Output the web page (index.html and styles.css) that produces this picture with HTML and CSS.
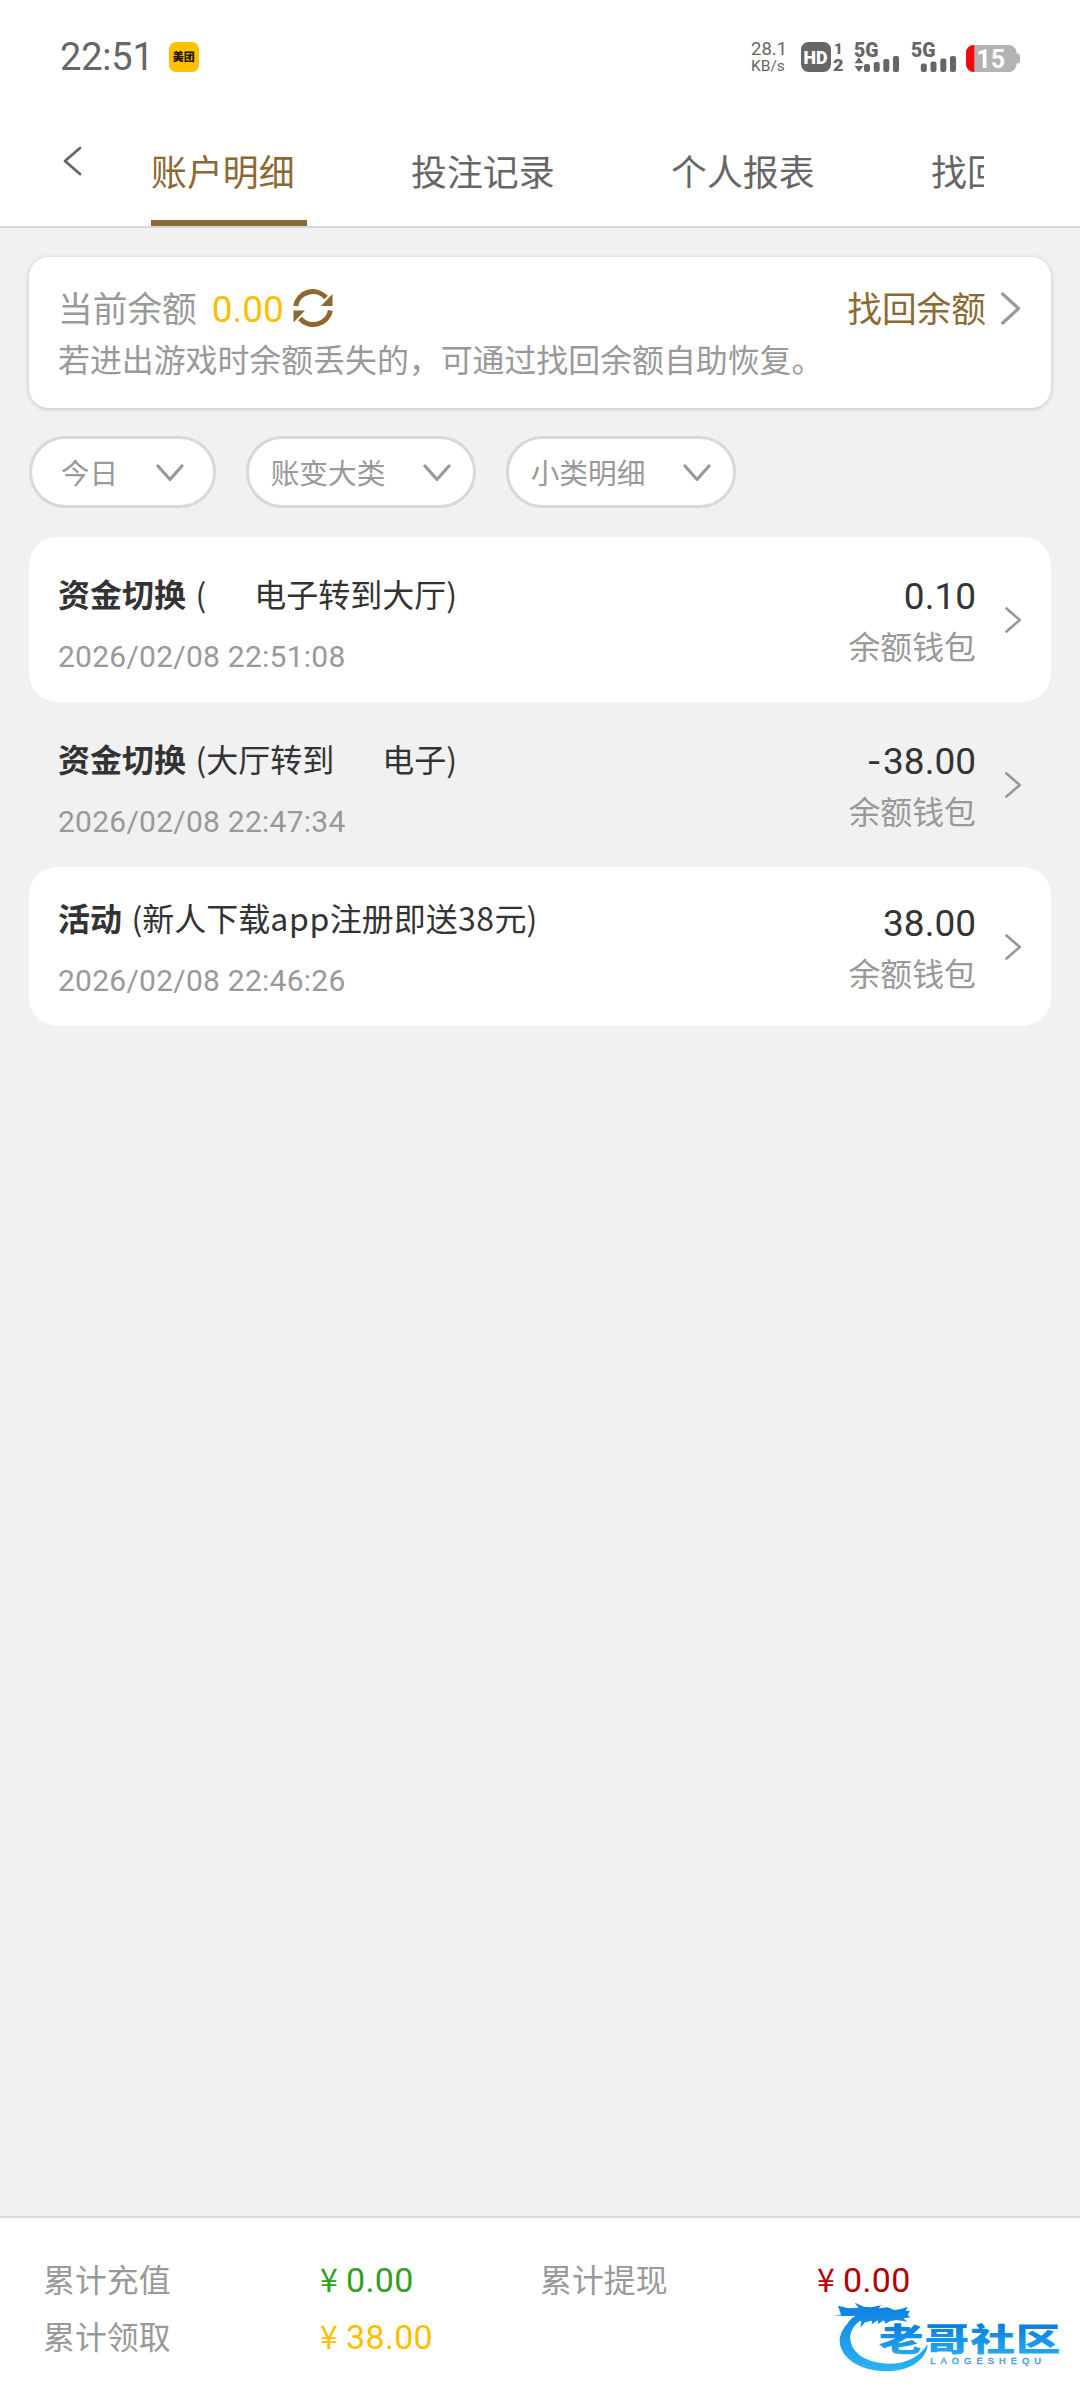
FILE: index.html
```html
<!DOCTYPE html>
<html lang="zh-CN">
<head>
<meta charset="utf-8">
<title>账户明细</title>
<link rel="stylesheet" href="styles.css">
</head>
<body>
<div class="page">
  <header class="header">
    <div class="status">
      <span class="time">22:51</span>
      <span class="app-badge">美团</span>
      <div class="status-right">
        <div class="net"><span class="net-value">28.1</span><span class="net-unit">KB/s</span></div>
        <svg class="status-icons" width="220" height="52" viewBox="0 -10 220 52">
          <g fill="#666" font-family="Roboto, sans-serif" font-weight="900">
            <rect x="1" y="1" width="30" height="30" rx="7.5"/>
            <text x="3.4" y="22.5" font-size="19" fill="#fff" textLength="24" lengthAdjust="spacingAndGlyphs">HD</text>
            <text x="34" y="12.5" font-size="15">1</text>
            <text x="33" y="30" font-size="16" textLength="10.5" lengthAdjust="spacingAndGlyphs">2</text>
            <text x="54" y="15.8" font-size="20" textLength="24.5" lengthAdjust="spacingAndGlyphs">5G</text>
            <path d="M59 16.3l4.400 6h-8.800zM59 31l4.400-6h-8.800z"/>
            <rect x="64" y="23" width="6" height="8" rx="2"/>
            <rect x="73.7" y="21" width="6" height="10" rx="2"/>
            <rect x="83.3" y="18" width="6" height="13" rx="2"/>
            <rect x="93" y="15" width="6" height="16" rx="2"/>
            <text x="111" y="15.8" font-size="20" textLength="24.5" lengthAdjust="spacingAndGlyphs">5G</text>
            <rect x="120.8" y="22.5" width="6" height="8.5" rx="2"/>
            <rect x="130.5" y="20.5" width="6" height="10.5" rx="2"/>
            <rect x="140.3" y="17.5" width="6" height="13.5" rx="2"/>
            <rect x="150" y="15" width="6" height="16" rx="2"/>
          </g>
          <path d="M174 4h35a7.500 7.500 0 0 1 7.500 7.500v1h1.500q2 0 2 3v4q0 3-2 3h-1.500v1a7.500 7.500 0 0 1-7.500 7.500h-35z" fill="#b3b3b3"/>
          <path d="M174.300 4v27h-.8a7.500 7.500 0 0 1-7.500-7.500v-12a7.500 7.500 0 0 1 7.500-7.500z" fill="#f00a0a"/>
          <text x="176.500" y="27" font-family="Roboto, sans-serif" font-weight="700" font-size="25" fill="#fff">15</text>
        </svg>
      </div>
    </div>
    <nav class="nav">
      <svg class="back" width="24" height="32" viewBox="0 0 24 32"><path d="M18 3L3 16l15 13" fill="none" stroke="#666" stroke-width="2.800" stroke-linecap="round" stroke-linejoin="round"/></svg>
      <div class="tabs">
        <a class="tab active">账户明细</a>
        <a class="tab">投注记录</a>
        <a class="tab">个人报表</a>
        <a class="tab">找回余额</a>
      </div>
    </nav>
  </header>

  <main class="main">
    <section class="balance">
      <div class="balance-line">
        <span>当前余额</span>
        <span class="balance-value">0.00</span>
        <svg class="refresh" width="40" height="40" viewBox="0 0 40 40"><g fill="none" stroke="#8c6932" stroke-width="5"><path d="M2.600 18A17.400 17 0 0 1 33 9.500"/><path d="M37.400 22.500A17.400 17 0 0 1 7 30.500"/></g><path d="M39.500 6v12H28zM.5 34.500V22.500H12z" fill="#8c6932"/></svg>
        <a class="recover">找回余额</a>
        <svg class="recover-arrow" width="20" height="33" viewBox="0 0 20 33"><path d="M1.700 2l15.800 14.500L1.700 31" fill="none" stroke="#999" stroke-width="3.200" stroke-linecap="round" stroke-linejoin="round"/></svg>
      </div>
      <p class="hint">若进出游戏时余额丢失的，可通过找回余额自助恢复。</p>
    </section>

    <section class="filters">
      <button class="pill pill-short">今日<svg class="down" width="28" height="18" viewBox="0 0 28 18"><path d="M2 2l12 13.500L26 2" fill="none" stroke="#999" stroke-width="3.200" stroke-linecap="round" stroke-linejoin="round"/></svg></button>
      <button class="pill">账变大类<svg class="down" width="28" height="18" viewBox="0 0 28 18"><path d="M2 2l12 13.500L26 2" fill="none" stroke="#999" stroke-width="3.200" stroke-linecap="round" stroke-linejoin="round"/></svg></button>
      <button class="pill">小类明细<svg class="down" width="28" height="18" viewBox="0 0 28 18"><path d="M2 2l12 13.500L26 2" fill="none" stroke="#999" stroke-width="3.200" stroke-linecap="round" stroke-linejoin="round"/></svg></button>
    </section>

    <section class="list">
      <article class="row">
        <div class="info">
          <div class="title tall"><b>资金切换</b><span class="open">(</span><span class="blank"></span><span>电子转到大厅)</span></div>
          <div class="date">2026/02/08 22:51:08</div>
        </div>
        <div class="sum"><span class="amount">0.10</span><span class="wallet">余额钱包</span></div>
        <svg class="go" width="18" height="28" viewBox="0 0 18 28"><path d="M2.500 2.500L15.800 14 2.500 25.500" fill="none" stroke="#999" stroke-width="2.700" stroke-linecap="round" stroke-linejoin="round"/></svg>
      </article>
      <article class="row plain">
        <div class="info">
          <div class="title tall"><b>资金切换</b><span class="open">(</span><span>大厅转到</span><span class="blank"></span><span>电子)</span></div>
          <div class="date">2026/02/08 22:47:34</div>
        </div>
        <div class="sum"><span class="amount"><span class="minus">-</span>38.00</span><span class="wallet">余额钱包</span></div>
        <svg class="go" width="18" height="28" viewBox="0 0 18 28"><path d="M2.500 2.500L15.800 14 2.500 25.500" fill="none" stroke="#999" stroke-width="2.700" stroke-linecap="round" stroke-linejoin="round"/></svg>
      </article>
      <article class="row">
        <div class="info">
          <div class="title"><b>活动</b><span class="open">(</span><span>新人下载<span class="latin">app</span>注册即送<span class="latin">38</span>元)</span></div>
          <div class="date">2026/02/08 22:46:26</div>
        </div>
        <div class="sum"><span class="amount">38.00</span><span class="wallet">余额钱包</span></div>
        <svg class="go" width="18" height="28" viewBox="0 0 18 28"><path d="M2.500 2.500L15.800 14 2.500 25.500" fill="none" stroke="#999" stroke-width="2.700" stroke-linecap="round" stroke-linejoin="round"/></svg>
      </article>
    </section>
  </main>

  <footer class="totals">
    <span>累计充值</span><span class="money green"><i>¥</i>0.00</span>
    <span>累计提现</span><span class="money red"><i>¥</i>0.00</span>
    <span>累计领取</span><span class="money yellow"><i>¥</i>38.00</span>
  </footer>

  <svg class="watermark" width="260" height="110" viewBox="0 0 780 330">
    <defs>
      <linearGradient id="ring" gradientUnits="userSpaceOnUse" x1="0" y1="70" x2="0" y2="275"><stop offset="0" stop-color="#0b80e0"/><stop offset="1" stop-color="#2bb4f5"/></linearGradient>
      <linearGradient id="word" gradientUnits="userSpaceOnUse" x1="0" y1="-80" x2="0" y2="8"><stop offset="0" stop-color="#0a7fe0"/><stop offset="1" stop-color="#22a8f4"/></linearGradient>
    </defs>
    <path fill="url(#ring)" d="M160 92C95 104 59 146 59 184c3 52 62 91 146 90 66-2 116-36 118-82-20 34-58 58-110 59-71 1-119-31-122-74-2-32 25-62 69-72z"/>
    <path fill="url(#ring)" d="M54 77l32 8 30-2-12-15 28 12 22 2 30-6-8 9 27-3 20 8 18-2 22-8-6 12 13 1-7 12 9 7-22 3 13 10-34-5-20 4-12 7-6-10-16 11-2-11-18 12 1-11-21 5-14 16 3-20c-20-1-32 5-45 17 4-15 15-26 28-33-22 2-42 2-66-2l22-1z"/>
    <text transform="translate(176 214) scale(1.400 1)" font-family="'Noto Sans CJK SC', sans-serif" font-weight="900" font-size="96" textLength="390" lengthAdjust="spacing" fill="url(#word)">老哥社区</text>
    <text x="331" y="251" font-family="'Liberation Sans', sans-serif" font-size="28" textLength="332" lengthAdjust="spacing" fill="#3f93dc" stroke="#3f93dc" stroke-width="1">LAOGESHEQU</text>
  </svg>
</div>
</body>
</html>
```
FILE: styles.css
```css
* { box-sizing: border-box; margin: 0; padding: 0; }
body {
  width: 1080px;
  height: 2400px;
  overflow: hidden;
  background: #f1f1f1;
  color: #999;
  font-family: "Noto Sans CJK SC", sans-serif;
}
.page { position: relative; display: flex; flex-direction: column; height: 2400px; }

.header { height: 228px; background: #fff; border-bottom: 2px solid #d8d8d8; }
.status { display: flex; align-items: center; height: 112px; padding: 0 60px 0 60px; }
.time { font: 38px/44px Roboto, sans-serif; color: #666; letter-spacing: -0.2px; padding-top: 2px; }
.app-badge {
  width: 30px;
  height: 30px;
  margin: 2px 0 0 15px;
  border-radius: 7px;
  background: #ffc000;
  color: #1a1400;
  font-size: 11px;
  font-weight: 900;
  line-height: 29px;
  text-align: center;
}
.status-right { display: flex; align-items: center; margin: 2px 0 0 auto; }
.net { display: flex; flex-direction: column; width: 49px; color: #666; font-family: Roboto, sans-serif; }
.net-value { font-size: 18.5px; line-height: 18px; }
.net-unit { font-size: 15.5px; line-height: 16px; }
.status-icons { display: block; }

.nav { display: flex; height: 114px; padding-left: 62px; }
.back { flex: none; margin-top: 33px; }
.tabs { display: flex; gap: 104px; width: 833px; margin-left: 65px; overflow: hidden; }
.tab { flex: none; width: 156px; height: 114px; padding-top: 1px; font-size: 35.9px; line-height: 114px; color: #666; white-space: nowrap; }
.tab.active { color: #8c6932; box-shadow: inset 0 -6px #8c6932; }

.main { flex: 1; padding: 29px 29px 0; }
.balance {
  height: 151px;
  padding: 24px 30px 0 29px;
  border-radius: 20px;
  background: #fff;
  box-shadow: 0 1px 5px rgba(0, 0, 0, 0.2);
}
.balance-line { display: flex; align-items: baseline; height: 52px; font-size: 34.7px; line-height: 52px; }
.balance-value { margin-left: 15px; font-family: Roboto, sans-serif; font-size: 37px; color: #fbbf08; }
.refresh { align-self: center; margin: 2px 0 0 9px; }
.recover { margin-left: auto; color: #8c6932; }
.recover-arrow { align-self: center; margin: 2px 0 0 15px; }
.hint { font-size: 31.9px; line-height: 50px; }

.filters { display: flex; gap: 30px; margin-top: 28px; }
.pill {
  display: flex;
  align-items: center;
  justify-content: center;
  width: 230px;
  height: 72px;
  border: 3px solid #d8d8d8;
  border-radius: 36px;
  background: #fff;
  color: #999;
  font-family: inherit;
  font-size: 28.7px;
  line-height: 66px;
}
.pill-short { width: 187px; }
.down { margin: 1px 0 0 38px; }

.list { margin-top: 29px; }
.row { display: flex; align-items: center; padding: 25px 29px 23px; border-radius: 28px; background: #fff; }
.row.plain { background: none; }
.info { flex: 1; }
.title { display: flex; align-items: flex-end; height: 50px; color: #333; font-size: 32px; line-height: 50px; white-space: nowrap; }
.title.tall { height: 56px; }
.title b { font-weight: 700; }
.open { margin-left: 9.5px; }
.blank { width: 48px; }
.latin { letter-spacing: 0.6px; }
.date { margin-top: 17px; font: 30px/44px Roboto, sans-serif; letter-spacing: 0.25px; }
.sum { display: flex; flex-direction: column; align-items: flex-end; margin-top: 1px; }
.amount { font: 37px/48px Roboto, sans-serif; color: #333; }
.minus { display: inline-block; margin-right: 4px; transform: scaleX(1.15); }
.wallet { font-size: 31.9px; line-height: 48px; }
.go { margin: -1px 0 0 28px; }

.totals {
  display: grid;
  grid-template-columns: 274px 223px 274px 1fr;
  grid-auto-rows: 57px;
  align-content: start;
  align-items: baseline;
  height: 184px;
  padding: 32px 43px 0;
  border-top: 2px solid #d8d8d8;
  background: #fff;
  font-size: 31.9px;
  line-height: 57px;
}
.money { font-family: Roboto, sans-serif; font-size: 34px; letter-spacing: 0.3px; }
.money i { margin: 0 8px 0 3px; font: 32px "Noto Sans CJK SC", sans-serif; }
.green { color: #2fa022; }
.red { color: #b40000; }
.yellow { color: #fcbf00; }

.watermark { position: absolute; left: 820px; top: 2280px; }
```
